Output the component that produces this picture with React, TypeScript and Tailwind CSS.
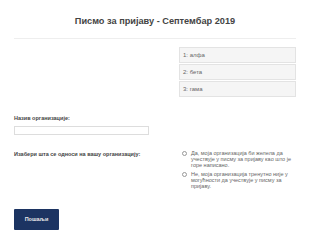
import React from "react";

const items = ["1: алфа", "2: бета", "3: гама"];

const options = [
  "Да, моја организација би желела да учествује у писму за пријаву као што је горе написано.",
  "Не, моја организација тренутно није у могућности да учествује у писму за пријаву.",
];

export default function App() {
  return (
    <div className="w-[310px] h-[245px] bg-white px-[14px] font-['Liberation_Sans',Arial,sans-serif] text-[#333]">
      <h1 className="pt-[15px] text-center text-[9.2px] font-bold text-[#444]">
        Писмо за пријаву - Септембар 2019
      </h1>
      <hr className="mt-[9px] border-[#eeeeee]" />

      <div className="grid grid-cols-[165px_1fr]">
        <div />
        <ul className="mt-[8px] flex flex-col gap-[1px]">
          {items.map((item) => (
            <li
              key={item}
              className="h-[16px] border border-[#e3e3e3] bg-[#f5f5f5] pl-[3px] text-[6px] leading-[14px] text-[#666]"
            >
              {item}
            </li>
          ))}
        </ul>
      </div>

      <label className="mt-[17px] block text-[5.5px] font-bold text-[#444]">Назив организације:</label>
      <input className="mt-[4px] block h-[9px] w-[135px] border border-[#dddddd] bg-white" />

      <div className="mt-[15px] grid grid-cols-[164px_1fr]">
        <p className="text-[5.5px] font-bold text-[#444]">Изабери шта се односи на вашу организацију:</p>
        <div className="flex flex-col gap-[3px]">
          {options.map((text) => (
            <label key={text} className="flex items-start gap-[4px]">
              <span className="mt-[1px] ml-[4px] size-[5px] shrink-0 rounded-full border border-[#999] bg-white" />
              <span className="text-[5.5px] leading-[6px] text-[#666]">{text}</span>
            </label>
          ))}
        </div>
      </div>

      <button className="mt-[20px] h-[21px] w-[45px] rounded-[1px] bg-[#1c3462] text-[5.5px] font-bold text-[#e8e8e8]">
        Пошаљи
      </button>
    </div>
  );
}
